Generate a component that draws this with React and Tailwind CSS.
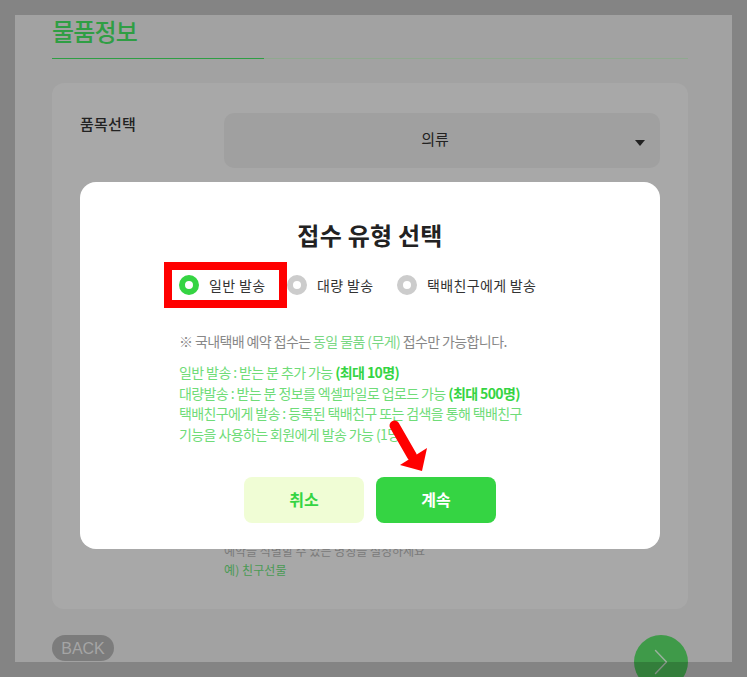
const font = { fontFamily: '"Noto Sans CJK KR", "Noto Sans", sans-serif' };

function Radio({ label, active }) {
    return (
        <div className="flex items-center gap-[10px]">
            <span className={`block w-5 h-5 rounded-full border-[6px] bg-white ${active ? "border-[#35d443]" : "border-[#cccccc]"}`} />
            <span className="text-sm text-[#333333] tracking-[0.35px]">{label}</span>
        </div>
    );
}

export default function App() {
    return (
        <div className="relative h-[677px] overflow-hidden bg-[#a2a2a2]" style={font}>
            {/* page behind the modal */}
            <div className="pl-[52px] pr-[59px] pt-[13px]">
                <h2 className="text-[24px] leading-[36px] font-medium text-[#2f9e44] tracking-[-0.8px]">물품정보</h2>
                <div className="mt-[9px] h-px bg-[#8fa98f]">
                    <div className="w-[212px] h-px bg-[#2f9e44]" />
                </div>

                <div className="mt-6 h-[526px] rounded-xl bg-[#a8a8a8] pl-7 pr-7 pt-[30px]">
                    <div className="flex">
                        <div className="w-[144px] text-[15px] leading-[22px] font-medium text-[#222222] tracking-[0.2px]">품목선택</div>
                        <div className="relative flex-1 h-[55px] rounded-[10px] bg-[#a0a0a0] flex items-center justify-center pr-[14px] pb-[3px] text-[15px] text-[#222222]">
                            의류
                            <span className="absolute right-[15px] top-[27px] w-0 h-0 border-x-[5px] border-x-transparent border-t-[6px] border-t-[#222222]" />
                        </div>
                    </div>
                    <div className="ml-[144px] mt-[373px] text-xs leading-[20px] text-[#7a7a7a]">예약을 식별할 수 있는 명칭을 설정하세요</div>
                    <div className="ml-[144px] mt-[-1px] text-xs leading-[20px] text-[#4a9a55] tracking-[0.1px]">예) 친구선물</div>
                </div>

                <div className="mt-[26px] flex items-start justify-between">
                    <div className="w-[62px] h-[26px] pt-px rounded-full bg-[#7c7c7c] flex items-center justify-center text-[16px] text-[#a5a5a5]" style={{ fontFamily: '"Liberation Sans", sans-serif' }}>BACK</div>
                    <div className="w-[54px] h-[54px] rounded-full bg-[#3f9a49] flex items-center justify-center text-[#9db09f]">
                        <svg width="14" height="26" viewBox="0 0 14 26" fill="none" stroke="currentColor" strokeWidth="1.4" strokeLinecap="round" strokeLinejoin="round">
                            <path d="M1.5 1.5 L12.5 13 L1.5 24.5" />
                        </svg>
                    </div>
                </div>
            </div>

            {/* dim frame round the page */}
            <div className="absolute inset-0 border-[15px] border-black/[0.18]" />

            {/* modal */}
            <div className="absolute left-[80px] top-[182px] w-[580px] h-[367px] rounded-[16px] bg-white pt-[34px] flex flex-col">
                <h3 className="text-center text-[24px] leading-[38px] font-bold text-[#222222] tracking-[0.25px]">접수 유형 선택</h3>
                <div className="mt-[21px] ml-[99px] flex gap-[11px]">
                    <div className="w-[97px]"><Radio label="일반 발송" active /></div>
                    <div className="w-[99px]"><Radio label="대량 발송" /></div>
                    <Radio label="택배친구에게 발송" />
                </div>

                <p className="mt-[36px] ml-[99px] text-[14px] leading-[20px] text-[#888888] tracking-[-0.6px]">
                    ※ 국내택배 예약 접수는 <span className="text-[#7ad884]">동일 물품 (무게)</span> 접수만 가능합니다.
                </p>
                <div className="mt-[11px] ml-[99px] text-[14px] leading-[20.7px] text-[#6fdc78] tracking-[-0.6px]">
                    <p>일반 발송 : 받는 분 추가 가능 <b className="font-bold text-[#35d443]">(최대 10명)</b></p>
                    <p>대량발송 : 받는 분 정보를 엑셀파일로 업로드 가능 <b className="font-bold text-[#35d443]">(최대 500명)</b></p>
                    <p>택배친구에게 발송 : 등록된 택배친구 또는 검색을 통해 택배친구<br />기능을 사용하는 회원에게 발송 가능 (1명)</p>
                </div>

                <div className="absolute left-[164px] top-[295px] flex gap-3">
                    <button className="w-[120px] h-[46px] pb-[2px] rounded-lg bg-[#f0fdd5] text-[16px] font-bold text-[#35d443]">취소</button>
                    <button className="w-[120px] h-[46px] pb-[2px] rounded-lg bg-[#35d443] text-[16px] font-bold text-white">계속</button>
                </div>
            </div>

            {/* red annotations */}
            <div className="absolute left-[164px] top-[262px] w-[123px] h-[46px] border-[8px] border-[#ff0000]" />
            <svg className="absolute left-0 top-0" width="747" height="677" fill="none">
                <path d="M394.5 425.5 L412 456" stroke="#ff0000" strokeWidth="10" strokeLinecap="round" />
                <path d="M427 448 L400 465 L422 471 Z" fill="#ff0000" />
            </svg>
        </div>
    );
}
